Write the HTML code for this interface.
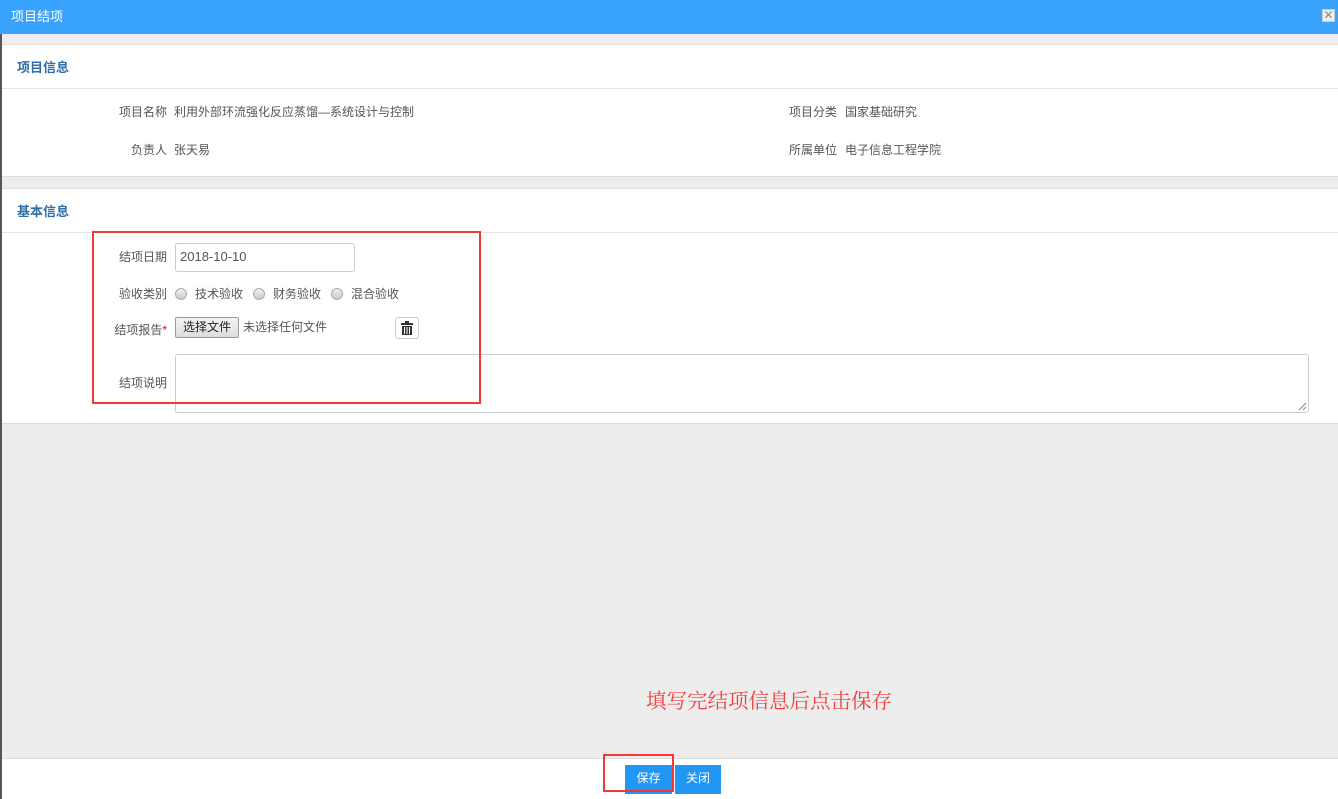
<!DOCTYPE html>
<html><head><meta charset="utf-8"><style>
*{box-sizing:border-box;margin:0;padding:0}
body{width:1338px;height:799px;overflow:hidden;background:#ededed;font-family:"Liberation Sans","Noto Sans CJK SC",sans-serif;font-size:12px;color:#555;position:relative}
.a{position:absolute}
.lbl{position:absolute;text-align:right;width:80px;color:#555}
.ttl{position:absolute;left:17px;font-weight:bold;color:#2f6fa8;font-size:13px}
.radio{display:inline-block;width:12px;height:12px;border-radius:50%;border:1px solid #aaa;background:linear-gradient(#eee,#ccc);vertical-align:-2px;margin-right:8px}
</style></head><body>
<div class="a" style="left:0;top:0;width:1338px;height:34px;background:#38a2fd"></div>
<div class="a" style="left:11px;top:6px;color:#fff;font-size:13px">项目结项</div>
<div class="a" style="left:1322px;top:9px;width:13px;height:13px;background:#eee;border:1px solid #ccc;color:#888;font-size:12px;line-height:11px;text-align:center">✕</div>
<div class="a" style="left:0;top:34px;width:2px;height:765px;background:#555"></div>

<div class="a" style="left:2px;top:44px;width:1336px;height:133px;background:#fff;border-top:1px solid #ddd;border-bottom:1px solid #ddd"></div>
<div class="a" style="left:2px;top:88px;width:1336px;height:1px;background:#e3e3e3"></div>
<div class="ttl" style="top:57px">项目信息</div>
<div class="lbl" style="left:87px;top:103px">项目名称</div>
<div class="a" style="left:174px;top:103px">利用外部环流强化反应蒸馏—系统设计与控制</div>
<div class="lbl" style="left:87px;top:141px">负责人</div>
<div class="a" style="left:174px;top:141px">张天易</div>
<div class="lbl" style="left:757px;top:103px">项目分类</div>
<div class="a" style="left:845px;top:103px">国家基础研究</div>
<div class="lbl" style="left:757px;top:141px">所属单位</div>
<div class="a" style="left:845px;top:141px">电子信息工程学院</div>

<div class="a" style="left:2px;top:188px;width:1336px;height:236px;background:#fff;border-top:1px solid #ddd;border-bottom:1px solid #ddd"></div>
<div class="a" style="left:2px;top:232px;width:1336px;height:1px;background:#e3e3e3"></div>
<div class="ttl" style="top:201px">基本信息</div>
<div class="lbl" style="left:87px;top:248px">结项日期</div>
<div class="a" style="left:175px;top:243px;width:180px;height:29px;border:1px solid #ccc;border-radius:3px;padding:5px 4px;color:#555;font-size:13px">2018-10-10</div>
<div class="lbl" style="left:87px;top:285px">验收类别</div>
<div class="a" style="left:175px;top:285px"><span class="radio"></span>技术验收&nbsp;&nbsp;&nbsp;<span class="radio"></span>财务验收&nbsp;&nbsp;&nbsp;<span class="radio"></span>混合验收</div>
<div class="lbl" style="left:87px;top:321px">结项报告<span style="color:#e00">*</span></div>
<div class="a" style="left:175px;top:317px;width:64px;height:21px;border:1px solid #999;border-radius:2px;background:linear-gradient(#f4f4f4,#ddd);color:#222;text-align:center;line-height:18px">选择文件</div>
<div class="a" style="left:243px;top:318px">未选择任何文件</div>
<div class="a" style="left:395px;top:317px;width:24px;height:22px;border:1px solid #ccc;border-radius:3px;text-align:center">
<svg width="12" height="14" viewBox="0 0 12 14" style="margin-top:3px"><rect x="4" y="0" width="4" height="2" fill="#333"/><rect x="0" y="2" width="12" height="2" fill="#333"/><rect x="1" y="5" width="10" height="9" fill="#333"/><rect x="3" y="6" width="1" height="7" fill="#fff"/><rect x="5.5" y="6" width="1" height="7" fill="#fff"/><rect x="8" y="6" width="1" height="7" fill="#fff"/></svg></div>
<div class="lbl" style="left:87px;top:374px">结项说明</div>
<div class="a" style="left:175px;top:354px;width:1134px;height:59px;border:1px solid #ccc;border-radius:3px"></div>
<svg class="a" style="left:1298px;top:402px" width="9" height="9"><path d="M1 8L8 1M5 8L8 5" stroke="#888" stroke-width="1"/></svg>
<div class="a" style="left:92px;top:231px;width:389px;height:173px;border:2px solid #f43838"></div>

<div class="a" style="left:646px;top:684px;color:#f04040;font-size:20.5px;font-family:'Noto Serif CJK SC',serif;white-space:nowrap">填写完结项信息后点击保存</div>

<div class="a" style="left:2px;top:758px;width:1336px;height:41px;background:#fff;border-top:1px solid #ddd"></div>
<div class="a" style="left:625px;top:765px;width:47px;height:29px;background:#2196f3;color:#fff;text-align:center;line-height:27px">保存</div>
<div class="a" style="left:675px;top:765px;width:46px;height:29px;background:#2196f3;color:#fff;text-align:center;line-height:27px">关闭</div>
<div class="a" style="left:603px;top:754px;width:71px;height:38px;border:2px solid #f43838"></div>
</body></html>
